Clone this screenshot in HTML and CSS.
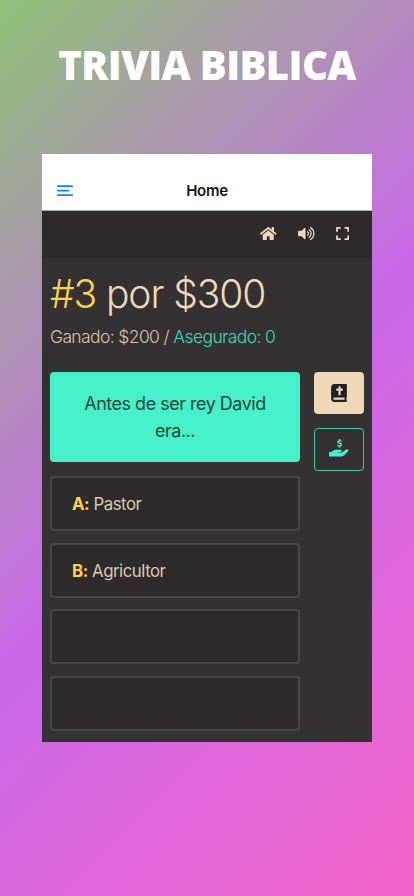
FILE: index.html
```html
<!DOCTYPE html>
<html lang="es">
<head>
<meta charset="utf-8">
<title>Trivia Biblica</title>
<link rel="stylesheet" href="styles.css">
</head>
<body>
<h1 class="title">TRIVIA BIBLICA</h1>
<main class="phone">
  <header class="nav">
    <svg class="menu" viewBox="0 0 16 12"><path d="M.8 1.2h14.4M.8 5.700H11.500M.8 10.200h14.4"/></svg>
    <span class="nav-title">Home</span>
  </header>
  <div class="toolbar">
    <svg class="home" viewBox="0 0 576 512"><path d="M280.37 148.26L96 300.11V464a16 16 0 0 0 16 16l112.06-.29a16 16 0 0 0 15.92-16V368a16 16 0 0 1 16-16h64a16 16 0 0 1 16 16v95.64a16 16 0 0 0 16 16.05L464 480a16 16 0 0 0 16-16V300L295.67 148.26a12.19 12.19 0 0 0-15.3 0zM571.6 251.47L488 182.56V44.05a12 12 0 0 0-12-12h-56a12 12 0 0 0-12 12v72.61L318.47 43a48 48 0 0 0-61 0L4.34 251.47a12 12 0 0 0-1.6 16.9l25.5 31A12 12 0 0 0 45.15 301l235.22-193.74a12.19 12.19 0 0 1 15.3 0L530.9 301a12 12 0 0 0 16.9-1.6l25.5-31a12 12 0 0 0-1.7-16.93z"/></svg>
    <svg class="volume" viewBox="0 0 576 512"><path d="M215.03 71.05L126.06 160H24c-13.26 0-24 10.74-24 24v144c0 13.25 10.74 24 24 24h102.06l88.97 88.95c15.03 15.03 40.97 4.47 40.97-16.97V88.02c0-21.46-25.96-31.98-40.97-16.97z"/><path class="wave" d="M327 201a63 63 0 0 1 0 110M377 128a152 152 0 0 1 0 256M430 55a240 240 0 0 1 0 402"/></svg>
    <svg class="expand" viewBox="0 0 448 512"><path d="M0 180V56c0-13.300 10.700-24 24-24h124c6.600 0 12 5.400 12 12v40c0 6.600-5.400 12-12 12H64v84c0 6.600-5.400 12-12 12H12c-6.600 0-12-5.400-12-12zM288 44v40c0 6.600 5.400 12 12 12h84v84c0 6.600 5.400 12 12 12h40c6.600 0 12-5.400 12-12V56c0-13.300-10.700-24-24-24H300c-6.600 0-12 5.400-12 12zm148 276h-40c-6.600 0-12 5.400-12 12v84h-84c-6.600 0-12 5.400-12 12v40c0 6.600 5.400 12 12 12h124c13.300 0 24-10.700 24-24V332c0-6.600-5.400-12-12-12zM160 468v-40c0-6.600-5.400-12-12-12H64v-84c0-6.600-5.400-12-12-12H12c-6.600 0-12 5.400-12 12v124c0 13.300 10.700 24 24 24h124c6.600 0 12-5.400 12-12z"/></svg>
  </div>
  <section class="game">
    <h2 class="prize"><span class="yellow">#3</span> por $300</h2>
    <p class="score">Ganado: $200 / <span class="mint">Asegurado: 0</span></p>
    <div class="board">
      <div class="column">
        <div class="question">Antes de ser rey David era...</div>
        <div class="answer"><b class="yellow">A:</b>&nbsp;Pastor</div>
        <div class="answer"><b class="yellow">B:</b>&nbsp;Agricultor</div>
        <div class="answer"></div>
        <div class="answer"></div>
      </div>
      <aside class="helps">
        <div class="help help-bible"><svg viewBox="0 0 448 512"><path fill-rule="evenodd" d="M448 358V25c0-14-11-25-25-25H96C43 0 0 43 0 96v320c0 53 43 96 96 96h327c14 0 25-10 25-24v-16c0-8-4-15-9-19-4-15-4-59 0-74 5-4 9-11 9-21zM144 144c0-9 7-16 16-16h48V80c0-9 7-16 16-16h32c9 0 16 7 16 16v48h48c9 0 16 7 16 16v32c0 9-7 16-16 16h-48v112c0 9-7 16-16 16h-32c-9 0-16-7-16-16V192h-48c-9 0-16-7-16-16zM381 448H96c-18 0-32-14-32-32s14-32 32-32h285z"/></svg></div>
        <div class="help help-safe"><svg viewBox="0 0 20 20"><path d="M0 13.1h2.200l1.700-1.400c.8-.6 1.600-.9 2.600-.9h5c1.600 0 1.600 2.200 0 2.200H8.700v.5h4.200l4-2.800c1.700-1.100 3.400.7 2.100 1.900l-4.500 4.200c-.6.500-1.200.7-2 .7H0z"/><path class="dollar" d="M12.400 2.500c-.5-.7-3.600-1.100-3.600.6 0 1.600 3.700.8 3.700 2.600 0 1.700-3.200 1.500-4 .4M10.600.1v1.700M10.600 6.900v1.800"/></svg></div>
      </aside>
    </div>
  </section>
</main>
</body>
</html>
```
FILE: styles.css
```css
* { box-sizing: border-box; }
body {
  margin: 0;
  height: 896px;
  overflow: hidden;
  background: linear-gradient(135deg, #8fc279 0%, #ca68e9 51.500%, #f365c9 100%);
  font-family: Inter, "Liberation Sans", sans-serif;
}
.title {
  margin: 0;
  padding-top: 37px;
  height: 153.500px;
  color: #fff;
  font: 800 40px/56px "Open Sans", sans-serif;
  letter-spacing: -0.600px;
  text-align: center;
  white-space: nowrap;
}
.phone {
  width: 330.700px;
  height: 588.500px;
  margin-left: 41.700px;
  background: #343132;
  overflow: hidden;
}
.nav {
  display: grid;
  grid-template-columns: 1fr auto 1fr;
  align-items: center;
  height: 57px;
  padding: 18px 15px 0;
  background: #fff;
  border-bottom: 1px solid #aaa;
}
.menu { width: 16px; height: 12px; fill: none; stroke: #1380f8; stroke-width: 1.800; stroke-linecap: round; }
.nav-title { font-size: 15px; font-weight: 600; letter-spacing: -0.250px; color: #151515; }
.toolbar {
  display: flex;
  align-items: center;
  justify-content: flex-end;
  height: 47px;
  padding-right: 23.500px;
  background: #2d2a2b;
  fill: #efd9b9;
}
.toolbar svg { height: 15px; margin-bottom: 1px; }
.home { width: 16.500px; margin-right: 21px; }
.volume { width: 17px; margin-right: 21px; }
.expand { width: 13.300px; }
.wave { fill: none; stroke: #efd9b9; stroke-width: 42; stroke-linecap: round; }
.game { padding: 12px 8.300px 0; }
.prize { margin: 0; font-size: 39px; line-height: 48px; font-weight: 300; letter-spacing: -1.100px; color: #efd9b9; white-space: nowrap; }
.yellow { color: #fdd24f; }
.score { margin: 6.500px 0 0; font-size: 17.500px; line-height: 25px; font-weight: 300; letter-spacing: -0.620px; color: #d8c5aa; white-space: nowrap; }
.mint { color: #43d9b2; }
.board { display: flex; gap: 14px; margin-top: 22.500px; }
.column { width: 250px; }
.question {
  height: 90px;
  padding: 18px 24px;
  border-radius: 4px;
  background: #46f0c9;
  color: #29463f;
  font-size: 18px;
  letter-spacing: -0.500px;
  line-height: 27px;
  text-align: center;
}
.answer {
  display: flex;
  align-items: center;
  height: 55px;
  margin-top: 11.700px;
  padding: 1px 0 0 20px;
  border: 2px solid #484546;
  border-radius: 4px;
  background: #2d2a2b;
  color: #dbc8ac;
  font-size: 16.800px;
  letter-spacing: -0.460px;
}
.question + .answer { margin-top: 14.400px; }
.answer b { font-weight: 700; }
.helps { display: flex; flex-direction: column; gap: 14px; }
.help { display: flex; align-items: center; justify-content: center; width: 50px; height: 42.500px; border-radius: 4px; }
.help-bible { background: #eed8b8; fill: #1f2022; }
.help-bible svg { width: 16px; height: 18px; }
.help-safe { border: 1px solid #3fc6a6; fill: #46f0c9; }
.help-safe svg { width: 20px; height: 20px; }
.dollar { fill: none; stroke: #46f0c9; stroke-width: 1.400; }
```
